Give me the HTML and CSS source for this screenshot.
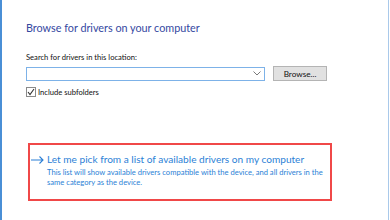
FILE: index.html
```html
<!DOCTYPE html>
<html lang="en">
<head>
  <meta charset="UTF-8">
  <title>Browse for drivers</title>
  <link rel="stylesheet" href="styles.css">
</head>
<body>
  <div class="janela">
    <div class="conteudo">
      <h1 class="titulo">Browse for drivers on your computer</h1>

      <div class="rotulo">Search for drivers in this location:</div>
      <div class="linha-busca">
        <div class="caixa">
          <svg class="seta-baixo" width="8" height="5" viewBox="0 0 8 5">
            <path d="M0.5 0.5 L4 4 L7.5 0.5" fill="none" stroke="#7a7a7a" stroke-width="1"/>
          </svg>
        </div>
        <button class="botao">Browse...</button>
      </div>

      <label class="opcao">
        <span class="marcador">
          <svg width="8" height="8" viewBox="0 0 8 8">
            <path d="M1 4 L3 6.5 L7 1" fill="none" stroke="#333" stroke-width="1.1"/>
          </svg>
        </span>
        Include subfolders
      </label>

      <div class="destaque">
        <div class="link-linha">
          <svg class="seta" width="13" height="8" viewBox="0 0 13 8">
            <path d="M0 4 H12 M8.5 0.5 L12 4 L8.5 7.5" fill="none" stroke="#2b7fd6" stroke-width="1.1"/>
          </svg>
          <div>
            <div class="link">Let me pick from a list of available drivers on my computer</div>
            <div class="descricao">This list will show available drivers compatible with the device, and all drivers in the same category as the device.</div>
          </div>
        </div>
      </div>
    </div>
  </div>
</body>
</html>
```

FILE: styles.css
```css
body {
  margin: 0;
  padding: 0;
  background: #ffffff;
  font-family: Lato, 'Noto Sans', sans-serif;
}

.janela {
  height: 220px;
  width: 389px;
  box-sizing: border-box;
  border-left: 2px solid #4a8fd6;
  border-right: 1px solid #a9c9ea;
  background: #ffffff;
}

.conteudo {
  padding-left: 24px;
  padding-top: 20px;
}

.titulo {
  margin: 0;
  font-size: 10.8px;
  font-weight: normal;
  color: #34489f;
  line-height: 15px;
}

.rotulo {
  margin-top: 17px;
  font-size: 7.6px;
  line-height: 11px;
  color: #111111;
}

.linha-busca {
  display: flex;
  align-items: center;
  gap: 8px;
  margin-top: 3px;
}

.caixa {
  width: 239px;
  height: 14px;
  box-sizing: border-box;
  border: 1px solid #7db2e8;
  background: #ffffff;
  display: flex;
  align-items: center;
  justify-content: flex-end;
  padding-right: 3px;
}

.botao {
  width: 54px;
  height: 15px;
  padding: 0;
  border: 1px solid #b4b4b4;
  background: #e1e1e1;
  font-family: inherit;
  font-size: 8.2px;
  color: #111111;
}

.opcao {
  display: flex;
  align-items: center;
  gap: 2px;
  margin-top: 6px;
  font-size: 7.6px;
  line-height: 10px;
  color: #111111;
}

.marcador {
  width: 8px;
  height: 8px;
  border: 1px solid #8a8a8a;
  display: flex;
  align-items: center;
  justify-content: center;
}

.destaque {
  margin-top: 46px;
  margin-left: 2px;
  width: 304px;
  height: 58px;
  box-sizing: border-box;
  border: 2px solid #f04848;
  padding: 7px 0 0 0;
}

.link-linha {
  display: flex;
  align-items: flex-start;
}

.seta {
  margin: 4px 3px 0 1px;
  flex-shrink: 0;
}

.link {
  color: #2b7fd6;
  font-size: 10.1px;
  line-height: 14px;
}

.descricao {
  color: #2b7fd6;
  font-size: 7.6px;
  line-height: 10px;
  margin-top: 1px;
  width: 284px;
}
```
